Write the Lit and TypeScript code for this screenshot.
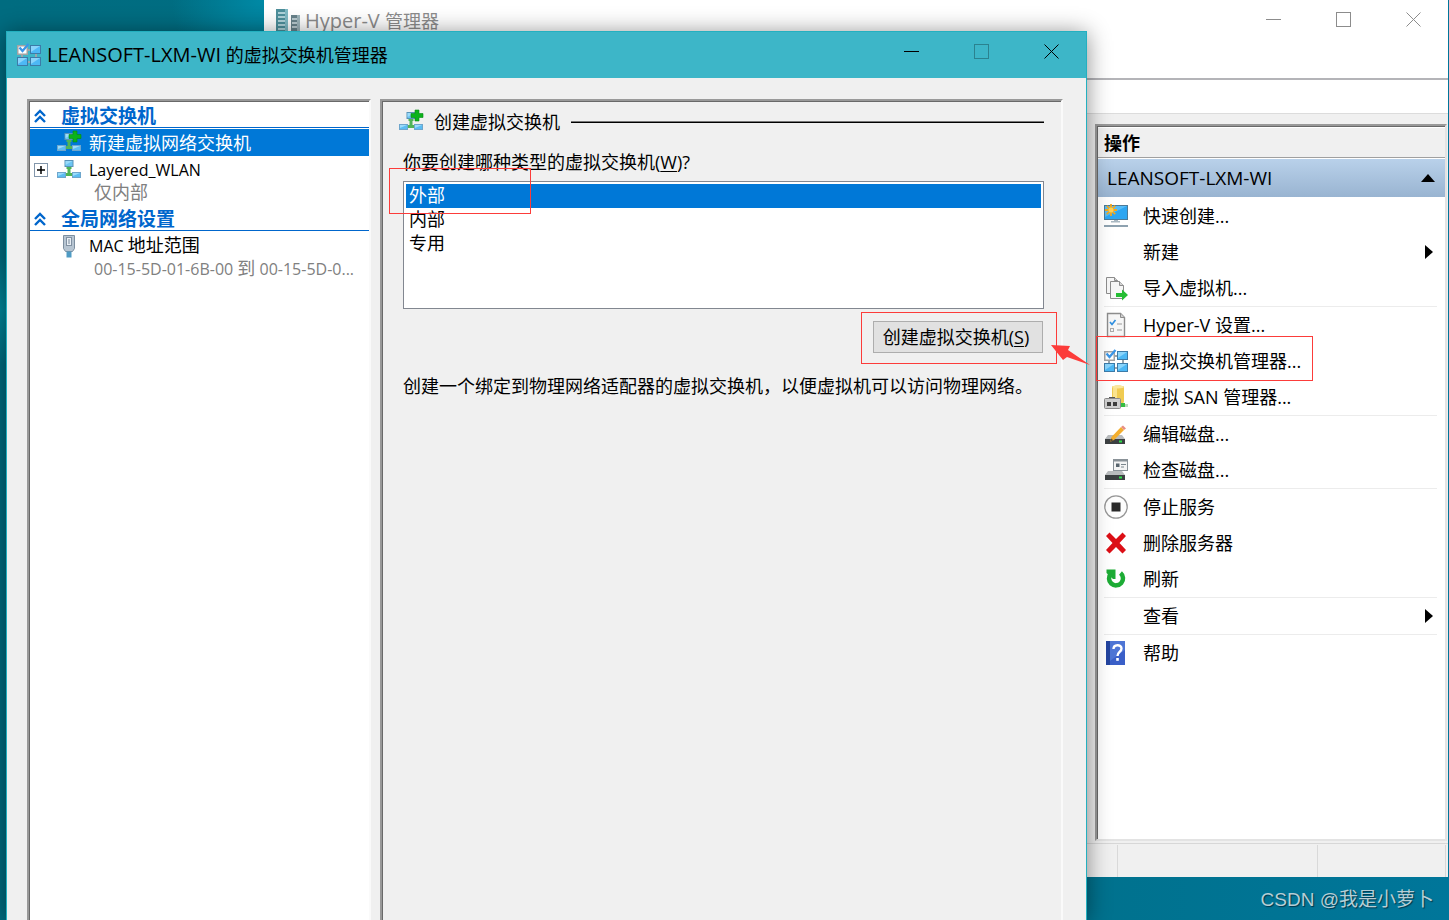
import { LitElement, html, svg, css, nothing, TemplateResult } from "lit";
import { customElement, property } from "lit/decorators.js";

const monitor = (x: number, y: number) => svg`
  <rect x=${x + 0.5} y=${y + 0.5} width="10" height="8" fill="#4db8f5" stroke="#3c7ba8"/>
  <path d="M${x + 1} ${y + 1}h9l-9 6z" fill="#8ad4fb"/>`;

const nodes = svg`
  <path d="M9.500 9h5v2h-1v4h3v3h-9v-3h3v-4h-1z" fill="#4fb457"/>
  <rect x="8" y="2.500" width="8" height="6" fill="#6cc5f3" stroke="#5a93b8"/>
  <rect x="0.500" y="14.500" width="8" height="5" fill="#5bbcf2" stroke="#6ea6cc"/>
  <rect x="15.500" y="14.500" width="8" height="5" fill="#5bbcf2" stroke="#6ea6cc"/>
  <path d="M1 15h7l-7 3zM16 15h7l-7 3zM8.500 3h7l-7 4z" fill="#9bdbfa"/>`;

const disk = svg`
  <path d="M4 13h14l3 4H1z" fill="#b9bcbe"/>
  <rect x="1" y="17" width="20" height="5" fill="#3c4042"/>
  <rect x="15" y="18.500" width="3" height="2" fill="#2fe04a"/>`;

const icons: Record<string, TemplateResult> = {
  vswitch: svg`
    <path d="M10 7h4M19 10v5M10 19h5M5 15v-4" stroke="#9aa6ad" stroke-width="2" fill="none"/>
    <rect x="0.750" y="2.750" width="9.500" height="8.500" fill="#fff" stroke="#a3a3a3" stroke-width="1.500"/>
    <path d="M2.500 4.500l3 3.500L11.500 1" stroke="#3a96e8" stroke-width="2.400" fill="none"/>
    ${monitor(13, 2)}${monitor(0, 14)}${monitor(13, 14)}`,
  nodes,
  nodesAdd: svg`${nodes}<path d="M16 0h4v3.500h4v4h-4V11h-4V7.500h-4v-4h4z" fill="#0ab31a" stroke="#078a12" stroke-width=".6"/>`,
  server: svg`
    <rect x="0" y="0" width="12" height="24" fill="#4d8f9b"/><rect x="9" y="0" width="3" height="24" fill="#7eb9c4"/>
    <path d="M2 4h7M2 8h7M2 12h7M2 16h7M2 20h7" stroke="#cfeaf0" stroke-width="1.500"/>
    <rect x="15" y="6" width="9" height="17" fill="#68828a"/><rect x="21" y="6" width="3" height="17" fill="#9db4ba"/>
    <path d="M16 10h5M16 14h5M16 18h5" stroke="#d5e4e8" stroke-width="1.500"/>`,
  plug: svg`
    <path d="M6.500 1.500h11v13l-2 3h-7l-2-3z" fill="#b7c5d2" stroke="#7d8fa0"/>
    <rect x="9.500" y="3.500" width="5" height="8" fill="#e9eff5" stroke="#8191a2"/>
    <path d="M12 5v5" stroke="#77889a"/><rect x="9.500" y="17.500" width="5" height="6" fill="#4f9bc4"/>`,
  quick: svg`
    <rect x="0.500" y="1.500" width="23" height="14" fill="#2da6f2" stroke="#4c7a98"/>
    <path d="M1 2h22L1 13z" fill="#56bcf8"/>
    <path d="M7 0v12M1 6h12M2.800 1.800l8.400 8.400M11.200 1.800L2.800 10.200" stroke="#f5a81c" stroke-width="1.800"/>
    <circle cx="7" cy="6" r="2.500" fill="#ffd257"/>
    <path d="M10 16h4v1h2v1.500H7V17h3z" fill="#a9b8c2"/><rect x="0" y="21" width="24" height="2" fill="#8ea2b0"/>`,
  importVm: svg`
    <path d="M2.500 1.500h8l3 3v13h-11z" fill="#f7f7f7" stroke="#8d8d8d"/>
    <path d="M10.500 1.500v3h3" fill="#d5d5d5" stroke="#8d8d8d"/>
    <path d="M6.500 5.500h9l4 4v13h-13z" fill="#f7f7f7" stroke="#8d8d8d"/>
    <path d="M15.500 5.500v4h4" fill="#d5d5d5" stroke="#8d8d8d"/>
    <path d="M12 17h6v-3.500l6 5.500-6 5.500V21h-6z" fill="#25bd34"/>`,
  settings: svg`
    <path d="M3.500.500h13l4 4v19h-17z" fill="#f6f6f6" stroke="#8d8d8d" stroke-width="1.400"/>
    <path d="M16.500.500v4h4" fill="#d0d0d0" stroke="#8d8d8d"/>
    <path d="M6 9l2 2.500L11.500 7" stroke="#2f8fe0" stroke-width="1.700" fill="none"/>
    <path d="M13 11h5M13 17h5" stroke="#9a9a9a"/><rect x="6.500" y="15.500" width="3" height="3" fill="none" stroke="#aaa"/>`,
  san: svg`
    <path d="M8 2c0-2 12-2 12 0v15c0 2-12 2-12 0z" fill="#f0cb52"/><path d="M9 3h4v13H9z" fill="#fae38f"/>
    <ellipse cx="14" cy="2" rx="6" ry="1.500" fill="#fbe79d"/>
    <path d="M17 18h4v4h-4z" fill="#35bd42"/><path d="M21 19h3v3h-3z" fill="#b9d9bd"/>
    <path d="M5 12h6v2H5z" fill="#555"/><rect x="0.500" y="13.500" width="16" height="10" rx="1" fill="#d0d0d0" stroke="#8b8b8b"/>
    <rect x="3" y="17" width="4" height="4" fill="#3e3e3e"/><rect x="9" y="17" width="4" height="4" fill="#3e3e3e"/>`,
  editDisk: svg`${disk}<path d="M6 20l1.500-5L17 5l3 3-10 10z" fill="#f3ae2e"/><path d="M17 5l2-1.500 3 3L20 8z" fill="#e88f84"/><path d="M6 20l1.300-3.500 2 1.800z" fill="#5a4a30"/>`,
  checkDisk: svg`${disk}<rect x="9.500" y="1.500" width="14" height="11" fill="#f4f4f4" stroke="#8a9298"/><path d="M10 2.500h13" stroke="#8a9298" stroke-width="2"/><rect x="12" y="5.500" width="3.500" height="3.500" fill="#59656e"/><path d="M17 6.500h5M17 9h3" stroke="#7b868d"/>`,
  stop: svg`<circle cx="12" cy="12" r="11.200" fill="#fdfdfd" stroke="#979797" stroke-width="1.300"/><rect x="7.500" y="7.500" width="9" height="9" fill="#2a2a2a"/>`,
  remove: svg`<path d="M2 5l3.500-3.500L12 8l6.500-6.500L22 5l-6.500 7 6.500 7-3.500 3.500L12 16l-6.500 6.500L2 19l6.500-7z" fill="#dc0f16"/>`,
  refresh: svg`<path d="M7 6.500A7 7 0 1 0 16.500 6" fill="none" stroke="#1dac35" stroke-width="4.500"/><path d="M2.500 2.500h9v9.500H9L2.500 6z" fill="#1dac35"/>`,
  help: svg`<rect x="2" y="0" width="19" height="24" fill="#3a5fc8"/><path d="M2 0h4v24H2z" fill="#24459f"/><path d="M6 0h15v9L6 20z" fill="#5f86e0" opacity=".55"/>
    <path d="M9.500 8c0-5 8-5 8-.5 0 3.500-4 3.500-4 7.500" fill="none" stroke="#fff" stroke-width="2.400"/><rect x="12.200" y="17" width="2.600" height="2.800" fill="#fff"/>`,
};

const fonts = css`
  :host {
    font-family: "Open Sans", "Noto Sans CJK SC", sans-serif;
    font-size: 18px;
    line-height: 24px;
    color: #000;
  }
  button {
    font: inherit;
    color: inherit;
    border: 0;
    border-radius: 0;
    background: none;
    padding: 0;
    margin: 0;
  }
  .latin { font-size: 20px; }
`;

@customElement("mmc-icon")
class MmcIcon extends LitElement {
  @property() name = "";
  static styles = css`
    :host { display: block; width: 24px; height: 24px; flex: none; }
    svg { display: block; width: 24px; height: 24px; overflow: visible; }
  `;
  render() {
    return html`<svg viewBox="0 0 24 24" aria-hidden="true">${icons[this.name] ?? nothing}</svg>`;
  }
}

@customElement("window-controls")
class WindowControls extends LitElement {
  @property({ type: Boolean, attribute: "fixed-size" }) fixedSize = false;
  static styles = [fonts, css`
    :host { display: flex; align-self: flex-start; color: inherit; }
    .control { width: 70px; height: 38px; display: grid; place-items: center; }
    .control:disabled { opacity: .28; }
    svg { display: block; fill: none; stroke: currentColor; }
  `];
  render() {
    return html`
      <button class="control" aria-label="最小化"><svg width="15" height="15"><path d="M0 7.500h15"/></svg></button>
      <button class="control" aria-label="最大化" ?disabled=${this.fixedSize}><svg width="15" height="15"><rect x=".5" y=".5" width="14" height="14"/></svg></button>
      <button class="control" aria-label="关闭"><svg width="15" height="15"><path d="M.5.5l14 14M14.500.5l-14 14"/></svg></button>`;
  }
}

interface Action { label: string; icon?: string; submenu?: boolean; }

const actionGroups: Action[][] = [
  [{ label: "快速创建...", icon: "quick" }, { label: "新建", submenu: true }, { label: "导入虚拟机...", icon: "importVm" }],
  [{ label: "Hyper-V 设置...", icon: "settings" }, { label: "虚拟交换机管理器...", icon: "vswitch" }, { label: "虚拟 SAN 管理器...", icon: "san" }],
  [{ label: "编辑磁盘...", icon: "editDisk" }, { label: "检查磁盘...", icon: "checkDisk" }],
  [{ label: "停止服务", icon: "stop" }, { label: "删除服务器", icon: "remove" }, { label: "刷新", icon: "refresh" }],
  [{ label: "查看", submenu: true }],
  [{ label: "帮助", icon: "help" }],
];

@customElement("manager-window")
class ManagerWindow extends LitElement {
  static styles = [fonts, css`
    :host { display: flex; flex-direction: column; background: #f0f0f0; }
    .title { display: flex; height: 42px; background: #fff; color: #8c8c8c; padding-left: 12px; }
    .caption { display: flex; align-items: center; gap: 5px; flex: 1; }
    .menu { height: 36px; background: #fff; border-bottom: 2px solid #b4b4b8; }
    .tools { height: 33px; background: #fff; border-bottom: 1px solid #dcdcdc; }
    .body { flex: 1; display: flex; justify-content: flex-end; padding: 10px 1px 2px 0; }
    .actions {
      box-sizing: border-box; width: 352px; background: #fff; padding: 1px 0 0 1px;
      border: 2px solid; border-color: #999 #e3e3e3 #e3e3e3 #999;
      box-shadow: inset 1px 1px #696969;
    }
    .heading { margin: 0; font-size: 18px; height: 29px; line-height: 30px; padding-left: 6px; background: #f0f0f0; border-top: 1px solid #fff; border-bottom: 1px solid #a0a0a0; }
    .server { box-sizing: border-box; width: 100%; height: 38px; margin-top: 1px; padding: 0 10px 0 9px; display: flex; align-items: center; justify-content: space-between; background: linear-gradient(#b9d1ea, #99b4d1); font-size: 19px; }
    .groups { padding-top: 1px; }
    .group { padding: 0 8px 0 6px; }
    .group + .group::before { content: ""; display: block; height: 1px; background: #ececec; }
    .action { display: flex; align-items: center; gap: 15px; height: 36px; width: 100%; text-align: left; }
    .label { flex: 1; white-space: nowrap; }
    .sub { margin-right: 4px; }
    .status { display: flex; height: 32px; border-top: 1px solid #d7d7d7; padding: 1px 2px 0 0; justify-content: flex-end; }
    .cell { box-sizing: border-box; width: 200px; border-left: 1px solid #d9d9d9; }
    .cell.last { width: 129px; border-right: 1px solid #d7d7d7; }
  `];
  render() {
    return html`
      <div class="title">
        <div class="caption"><mmc-icon name="server"></mmc-icon><span><span class="latin">Hyper-V </span>管理器</span></div>
        <window-controls></window-controls>
      </div>
      <div class="menu"></div>
      <div class="tools"></div>
      <div class="body">
        <section class="actions">
          <h2 class="heading">操作</h2>
          <button class="server"><span>LEANSOFT-LXM-WI</span><svg width="14" height="8" aria-hidden="true"><path d="M7 0l7 8H0z"/></svg></button>
          <div class="groups">
            ${actionGroups.map((g) => html`<div class="group">${g.map((a) => html`
              <button class="action">
                <mmc-icon name=${a.icon ?? ""}></mmc-icon><span class="label">${a.label}</span>
                ${a.submenu ? html`<svg class="sub" width="8" height="14" aria-hidden="true"><path d="M0 0l8 7-8 7z"/></svg>` : nothing}
              </button>`)}</div>`)}
          </div>
        </section>
      </div>
      <div class="status"><div class="cell"></div><div class="cell last"></div></div>`;
  }
}

@customElement("switch-dialog")
class SwitchDialog extends LitElement {
  static styles = [fonts, css`
    :host { box-sizing: border-box; display: flex; flex-direction: column; background: #f0f0f0; border: solid #23b0c0; border-width: 1px 1px 0; box-shadow: 0 2px 22px rgba(0, 0, 0, .45); }
    .title { display: flex; height: 46px; background: #3db6c8; padding-left: 10px; }
    .caption { display: flex; align-items: center; gap: 6px; flex: 1; }
    .body { flex: 1; display: flex; gap: 9px; padding: 21px 23px 0 20px; }
    .pane { box-sizing: border-box; border: 2px solid; border-bottom: 0; padding: 1px 0 0 1px; border-color: #999 #fafafa #fff #999; box-shadow: inset 1px 1px #696969; }
    .tree { width: 344px; background: #fff; }
    .section { box-sizing: border-box; display: flex; align-items: center; gap: 14px; width: 100%; height: 26px; margin-bottom: 1px; padding: 3px 0 0 4px; font-weight: 700; font-size: 19px; color: #06c; border-bottom: 1px solid #06c; }
    .section.next { margin-top: 2px; }
    .node { display: flex; align-items: center; height: 27px; width: 100%; padding-left: 4px; gap: 8px; text-align: left; }
    .node.selected { background: #0078d7; color: #fff; }
    .twisty { width: 14px; height: 14px; margin-right: 1px; flex: none; }
    .detail { height: 20px; line-height: 18px; padding-left: 64px; color: #808080; white-space: nowrap; }
    .small { font-size: 16px; }
    .main { flex: 1; }
    .heading { display: flex; align-items: center; gap: 11px; height: 40px; padding: 0 17px 0 16px; }
    .heading h2 { margin: 0; font-size: 18px; font-weight: 400; }
    .rule { flex: 1; border-top: 1px solid #777; border-bottom: 1px solid #000; }
    .form { display: flex; flex-direction: column; padding: 8px 17px 0 20px; }
    .kinds {
      box-sizing: border-box; width: 100%; height: 128px; margin: 7px 0 12px; padding: 2px;
      border: 1px solid #828790; border-radius: 0; background: #fff; outline: 0;
      font: inherit; color: #000; overflow: hidden;
    }
    .kinds option { display: flex; align-items: center; height: 24px; min-height: 24px; padding: 0 3px 4px; box-sizing: border-box; }
    .kinds option:checked { background: #0078d7 linear-gradient(#0078d7, #0078d7); -webkit-text-fill-color: #fff; }
    .create { box-sizing: border-box; align-self: flex-end; width: 170px; height: 32px; padding-right: 4px; background: #e1e1e1; border: 1px solid #adadad; margin-right: 1px; white-space: nowrap; }
    .note { margin: 21px 0 0; white-space: nowrap; }
    u { text-underline-offset: 2px; text-decoration-thickness: 1px; }
  `];
  private chevrons = svg`<path d="M1 7l5-5 5 5M1 13l5-5 5 5" fill="none" stroke="#06c" stroke-width="2.400"/>`;
  render() {
    return html`
      <div class="title">
        <div class="caption"><mmc-icon name="vswitch"></mmc-icon><span><span class="latin">LEANSOFT-LXM-WI</span> 的虚拟交换机管理器</span></div>
        <window-controls fixed-size></window-controls>
      </div>
      <div class="body">
        <nav class="pane tree">
          <button class="section"><svg width="13" height="14" aria-hidden="true">${this.chevrons}</svg>虚拟交换机</button>
          <button class="node selected"><span class="twisty"></span><mmc-icon name="nodesAdd"></mmc-icon>新建虚拟网络交换机</button>
          <button class="node">
            <svg class="twisty" viewBox="0 0 14 14" aria-hidden="true"><rect x=".5" y=".5" width="13" height="13" fill="#fff" stroke="#8296ab"/><path d="M3 7h8M7 3v8" stroke="#000" stroke-width="1.500"/></svg>
            <mmc-icon name="nodes"></mmc-icon><span class="small">Layered_WLAN</span>
          </button>
          <div class="detail">仅内部</div>
          <button class="section next"><svg width="13" height="14" aria-hidden="true">${this.chevrons}</svg>全局网络设置</button>
          <button class="node"><span class="twisty"></span><mmc-icon name="plug"></mmc-icon><span><span class="small">MAC </span>地址范围</span></button>
          <div class="detail"><span class="small">00-15-5D-01-6B-00 </span>到<span class="small"> 00-15-5D-0...</span></div>
        </nav>
        <main class="pane main">
          <div class="heading"><mmc-icon name="nodesAdd"></mmc-icon><h2>创建虚拟交换机</h2><span class="rule"></span></div>
          <div class="form">
            <label for="kinds">你要创建哪种类型的虚拟交换机(<u>W</u>)?</label>
            <select class="kinds" id="kinds" size="5">
              <option selected>外部</option><option>内部</option><option>专用</option>
            </select>
            <button class="create">创建虚拟交换机(<u>S</u>)</button>
            <p class="note">创建一个绑定到物理网络适配器的虚拟交换机，以便虚拟机可以访问物理网络。</p>
          </div>
        </main>
      </div>`;
  }
}

@customElement("app-root")
class AppRoot extends LitElement {
  static styles = [fonts, css`
    :host {
      display: block; position: relative; height: 100vh; overflow: hidden;
      background:
        radial-gradient(circle at 262px 0, #0089a5 0, transparent 90px),
        radial-gradient(ellipse at 0 310px, #00889c 0, transparent 130px),
        linear-gradient(90deg, #006c80, #006f86 60%, #00769a);
    }
    .manager { position: absolute; left: 264px; right: 1px; top: 0; bottom: 43px; }
    .dialog { position: absolute; left: 6px; right: 362px; top: 31px; bottom: 0; }
    .mark { position: absolute; box-sizing: border-box; border: 1px solid #fc3c3a; pointer-events: none; }
    .mark.kind { left: 389px; top: 168px; width: 142px; height: 46px; }
    .mark.create { right: 392px; top: 312px; width: 196px; height: 52px; }
    .mark.menu { right: 136px; top: 336px; width: 217px; height: 45px; }
    .arrow { position: absolute; right: 358px; top: 344px; pointer-events: none; }
    .credit { position: absolute; right: 15px; bottom: 8px; font-family: "Liberation Sans", "Noto Sans CJK SC", sans-serif; font-size: 19px; color: #b5ced6; text-shadow: 1px 1px 1px #00364a; }
  `];
  render() {
    return html`
      <manager-window class="manager"></manager-window>
      <switch-dialog class="dialog"></switch-dialog>
      <div class="mark kind"></div>
      <div class="mark create"></div>
      <div class="mark menu"></div>
      <svg class="arrow" width="40" height="22" aria-hidden="true"><path d="M0 1l19 1-2 4 22 15-23-8-4 3z" fill="#fc3c3a"/></svg>
      <div class="credit">CSDN @我是小萝卜</div>`;
  }
}
